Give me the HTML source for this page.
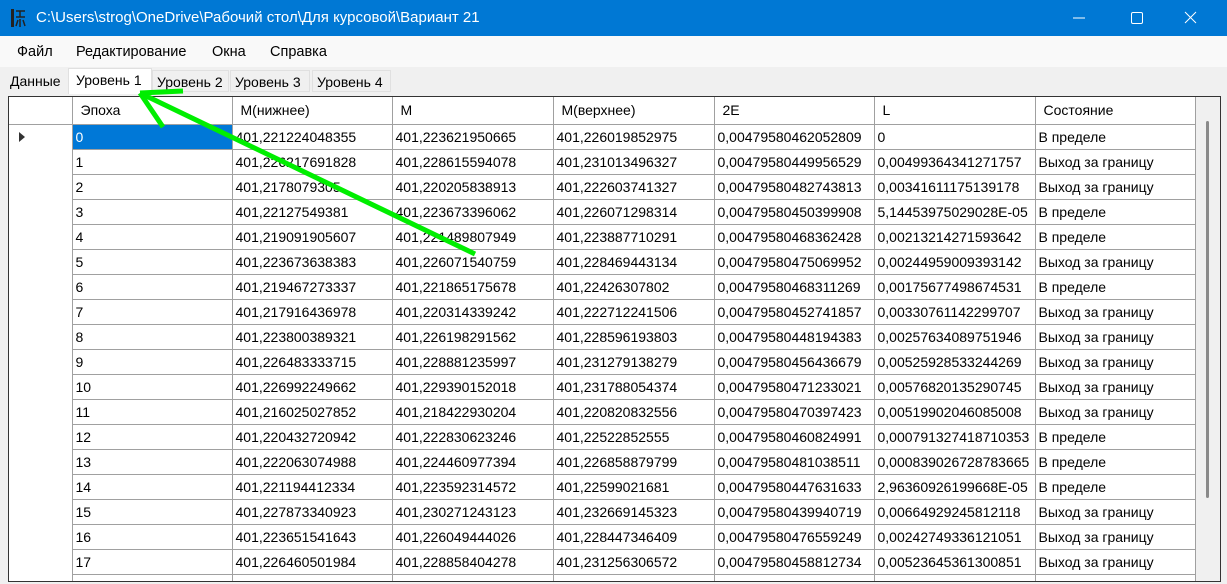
<!DOCTYPE html>
<html><head><meta charset="utf-8"><style>
*{margin:0;padding:0;box-sizing:border-box}
body{width:1227px;height:584px;overflow:hidden;background:#f0f0f0;font-family:"Liberation Sans","DejaVu Sans",sans-serif;font-size:14px;color:#000;position:relative}
.title{position:absolute;left:0;top:0;width:1227px;height:36px;background:#0078d4;color:#fff;font-size:15px}
.title .t{position:absolute;left:36px;top:9px}
.menu{position:absolute;left:0;top:36px;width:1227px;height:31px;background:#f9f9f9}
.menu span{position:absolute;top:8px;font-size:14.5px}
.tab{position:absolute;top:70px;height:22px;background:#f0f0f0;border:1px solid #e0e0e0;padding:3px 4px;font-size:14px;white-space:nowrap}
.grid{position:absolute;left:8px;top:96px;width:1213px;height:486px;border:1px solid #333;background:#f0f0f0;overflow:hidden}
table{border-collapse:collapse;position:absolute;left:0;top:0;table-layout:fixed}
td{height:25px;border:1px solid #a0a0a0;background:#fff;padding:0 3px;white-space:nowrap;overflow:hidden;font-size:14px}
td.rh{border:none;border-right:1px solid #a0a0a0;background:#fff}
tr.h td{height:27px;padding-left:8px;border-top:none}
td.sel{background:#0078d7;color:#fff}
.sb{position:absolute;left:1187px;top:0;width:24px;height:486px;background:#f0f0f0}
.sb div{position:absolute;left:10px;top:24px;width:3px;height:377px;background:#8a8a8a;border-radius:2px}
</style></head><body>
<div class="title">
<svg style="position:absolute;left:10px;top:8px" width="16" height="20"><rect x="1" y="1" width="3" height="18" fill="#222"/><path d="M6 3h9M10 3v6M6 9h9M8 12l-2 6M13 12l2 6M10 11v8" stroke="#222" stroke-width="1.5" fill="none"/></svg>
<span class="t">C:\Users\strog\OneDrive\Рабочий стол\Для курсовой\Вариант 21</span>
<svg style="position:absolute;left:1070px;top:10px" width="150" height="18"><path d="M3 8h12" stroke="#fff"/><rect x="61.5" y="2.5" width="11" height="11" rx="1.5" stroke="#fff" fill="none"/><path d="M115 2l11 11M126 2l-11 11" stroke="#fff"/></svg>
</div>
<div class="menu"><span style="left:17px">Файл</span><span style="left:76px">Редактирование</span><span style="left:212px">Окна</span><span style="left:270px">Справка</span></div>
<div class="tab" style="left:4px;border:none;background:#f0f0f0;padding-left:6px">Данные</div>
<div class="tab" style="left:68px;top:68px;height:26px;width:84px;background:#fff;border-bottom:none;padding-left:7px">Уровень 1</div>
<div class="tab" style="left:152px;width:77px">Уровень 2</div>
<div class="tab" style="left:230px;width:80px">Уровень 3</div>
<div class="tab" style="left:312px;width:79px">Уровень 4</div>
<div class="grid">
<table>
<colgroup><col style="width:63px"><col style="width:160px"><col style="width:160px"><col style="width:161px"><col style="width:161px"><col style="width:160px"><col style="width:161px"><col style="width:160px"></colgroup>
<tr class="h"><td class="rh" style="border-bottom:1px solid #a0a0a0"></td><td>Эпоха</td><td>M(нижнее)</td><td>M</td><td>M(верхнее)</td><td>2E</td><td>L</td><td>Состояние</td></tr>
<tr><td class="rh"><svg width="10" height="12" style="margin-left:6px;margin-top:4px"><path d="M1 1l6 5-6 5z" fill="#333"/></svg></td><td class="sel">0</td><td>401,221224048355</td><td>401,223621950665</td><td>401,226019852975</td><td>0,00479580462052809</td><td>0</td><td>В пределе</td></tr>
<tr><td class="rh"></td><td>1</td><td>401,226217691828</td><td>401,228615594078</td><td>401,231013496327</td><td>0,00479580449956529</td><td>0,00499364341271757</td><td>Выход за границу</td></tr>
<tr><td class="rh"></td><td>2</td><td>401,2178079305</td><td>401,220205838913</td><td>401,222603741327</td><td>0,00479580482743813</td><td>0,00341611175139178</td><td>Выход за границу</td></tr>
<tr><td class="rh"></td><td>3</td><td>401,22127549381</td><td>401,223673396062</td><td>401,226071298314</td><td>0,00479580450399908</td><td>5,14453975029028E-05</td><td>В пределе</td></tr>
<tr><td class="rh"></td><td>4</td><td>401,219091905607</td><td>401,221489807949</td><td>401,223887710291</td><td>0,00479580468362428</td><td>0,00213214271593642</td><td>В пределе</td></tr>
<tr><td class="rh"></td><td>5</td><td>401,223673638383</td><td>401,226071540759</td><td>401,228469443134</td><td>0,00479580475069952</td><td>0,00244959009393142</td><td>Выход за границу</td></tr>
<tr><td class="rh"></td><td>6</td><td>401,219467273337</td><td>401,221865175678</td><td>401,22426307802</td><td>0,00479580468311269</td><td>0,00175677498674531</td><td>В пределе</td></tr>
<tr><td class="rh"></td><td>7</td><td>401,217916436978</td><td>401,220314339242</td><td>401,222712241506</td><td>0,00479580452741857</td><td>0,00330761142299707</td><td>Выход за границу</td></tr>
<tr><td class="rh"></td><td>8</td><td>401,223800389321</td><td>401,226198291562</td><td>401,228596193803</td><td>0,00479580448194383</td><td>0,00257634089751946</td><td>Выход за границу</td></tr>
<tr><td class="rh"></td><td>9</td><td>401,226483333715</td><td>401,228881235997</td><td>401,231279138279</td><td>0,00479580456436679</td><td>0,00525928533244269</td><td>Выход за границу</td></tr>
<tr><td class="rh"></td><td>10</td><td>401,226992249662</td><td>401,229390152018</td><td>401,231788054374</td><td>0,00479580471233021</td><td>0,00576820135290745</td><td>Выход за границу</td></tr>
<tr><td class="rh"></td><td>11</td><td>401,216025027852</td><td>401,218422930204</td><td>401,220820832556</td><td>0,00479580470397423</td><td>0,00519902046085008</td><td>Выход за границу</td></tr>
<tr><td class="rh"></td><td>12</td><td>401,220432720942</td><td>401,222830623246</td><td>401,22522852555</td><td>0,00479580460824991</td><td>0,000791327418710353</td><td>В пределе</td></tr>
<tr><td class="rh"></td><td>13</td><td>401,222063074988</td><td>401,224460977394</td><td>401,226858879799</td><td>0,00479580481038511</td><td>0,000839026728783665</td><td>В пределе</td></tr>
<tr><td class="rh"></td><td>14</td><td>401,221194412334</td><td>401,223592314572</td><td>401,22599021681</td><td>0,00479580447631633</td><td>2,96360926199668E-05</td><td>В пределе</td></tr>
<tr><td class="rh"></td><td>15</td><td>401,227873340923</td><td>401,230271243123</td><td>401,232669145323</td><td>0,00479580439940719</td><td>0,00664929245812118</td><td>Выход за границу</td></tr>
<tr><td class="rh"></td><td>16</td><td>401,223651541643</td><td>401,226049444026</td><td>401,228447346409</td><td>0,00479580476559249</td><td>0,00242749336121051</td><td>Выход за границу</td></tr>
<tr><td class="rh"></td><td>17</td><td>401,226460501984</td><td>401,228858404278</td><td>401,231256306572</td><td>0,00479580458812734</td><td>0,00523645361300851</td><td>Выход за границу</td></tr>
<tr><td class="rh"></td><td></td><td></td><td></td><td></td><td></td><td></td><td></td></tr>
</table>
<div class="sb"><div></div></div>
</div>
<svg style="position:absolute;left:0;top:0" width="1227" height="584"><path d="M140 93L475 254M140 93L183 91M140 93L163 127" stroke="#00ee00" stroke-width="5" stroke-linecap="butt" fill="none"/></svg>
</body></html>
